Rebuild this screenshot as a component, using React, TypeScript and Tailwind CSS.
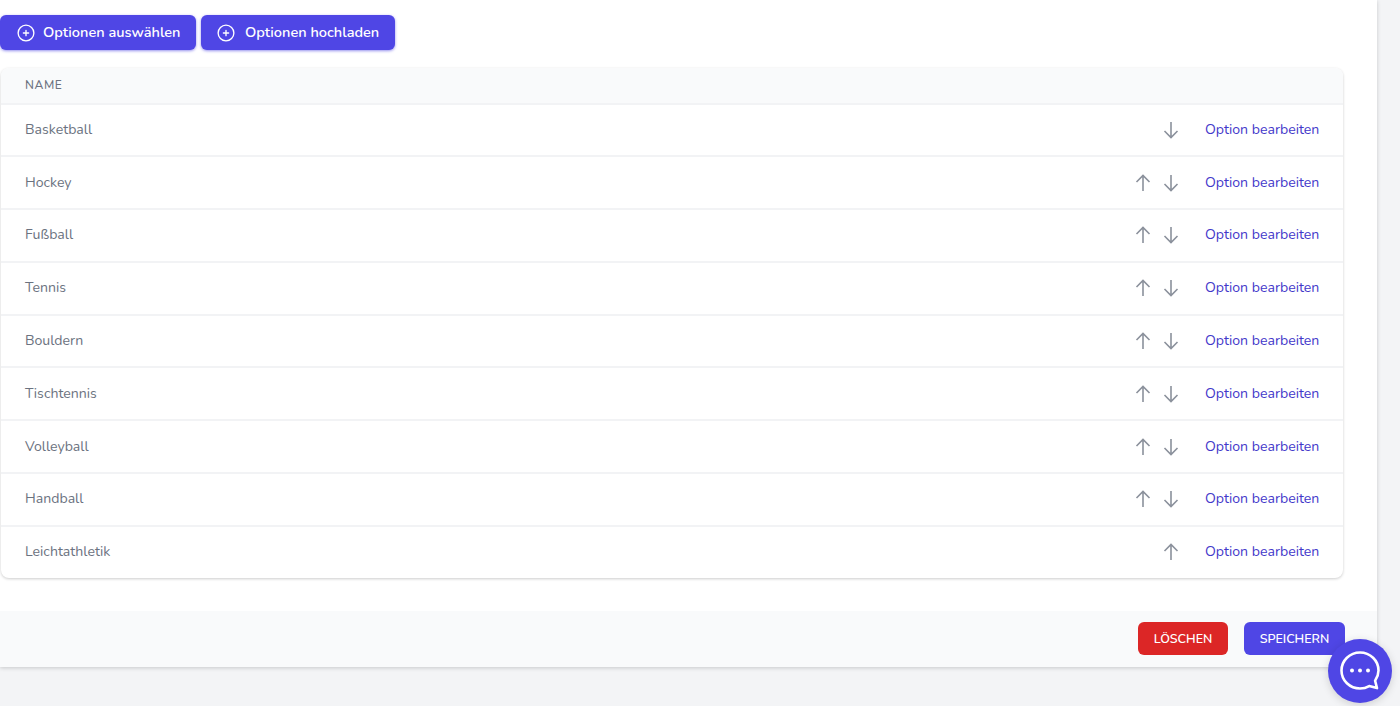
import React from "react";

const rows: [string, boolean, boolean][] = [
  ["Basketball", false, true],
  ["Hockey", true, true],
  ["Fußball", true, true],
  ["Tennis", true, true],
  ["Bouldern", true, true],
  ["Tischtennis", true, true],
  ["Volleyball", true, true],
  ["Handball", true, true],
  ["Leichtathletik", true, false],
];

function PlusCircle() {
  return (
    <svg width="18" height="18" viewBox="0 0 24 24" fill="none" stroke="currentColor" strokeWidth="1.8" strokeLinecap="round" className="shrink-0">
      <circle cx="12" cy="12" r="10.5" />
      <path d="M12 8.5v7M8.5 12h7" />
    </svg>
  );
}

function Arrow({ up }: { up?: boolean }) {
  return (
    <svg width="18" height="20" viewBox="0 0 18 20" fill="none" stroke="#8b919c" strokeWidth="1.6" className={up ? "rotate-180" : ""}>
      <path d="M9 2v15.5M2.5 11 9 17.5 15.5 11" />
    </svg>
  );
}

export default function App() {
  return (
    <div className="relative h-[706px] w-[1400px] overflow-hidden bg-[#f3f4f6] font-['Nunito','Lato','Noto_Sans',sans-serif] text-sm">
      <div className="flex h-[667px] w-[1377px] flex-col bg-white shadow-[0_1px_4px_rgba(0,0,0,0.18)]">
        <div className="flex flex-1 flex-col pl-px pr-[34px] pt-[15px]">
          <div className="flex gap-[5px] -ml-px">
            <button className="flex h-[35px] w-[196px] items-center gap-[8px] rounded-md bg-[#4f46e5] pl-[17px] text-[14.55px] font-semibold text-white shadow-[0_1px_3px_rgba(79,70,229,0.6)]">
              <PlusCircle />
              Optionen auswählen
            </button>
            <button className="flex h-[35px] w-[194px] items-center gap-[10px] rounded-md bg-[#4f46e5] pl-[16px] text-[14.55px] font-semibold text-white shadow-[0_1px_3px_rgba(79,70,229,0.6)]">
              <PlusCircle />
              Optionen hochladen
            </button>
          </div>
          <div className="mt-[18px] overflow-hidden rounded-lg bg-white shadow-[0_1px_3px_rgba(0,0,0,0.2)]">
            <div className="flex h-[34.5px] items-center bg-[#f9fafb] px-6 pb-px text-xs font-medium tracking-wider text-[#6b7280]">
              NAME
            </div>
            {rows.map(([name, up, down]) => (
              <div key={name} className="flex h-[52.8px] items-center border-t-2 border-[#f2f3f5] px-6 text-[14.1px] text-[#6b7280]">
                <span className="flex-1">{name}</span>
                <div className="flex w-[46px] justify-end gap-[10px]">
                  {up && <Arrow up />}
                  {down && <Arrow />}
                </div>
                <a className="ml-[25px] w-[114px] whitespace-nowrap text-[#4338ca]">Option bearbeiten</a>
              </div>
            ))}
          </div>
        </div>
        <div className="flex h-[56px] items-start justify-end gap-4 bg-[#f9fafb] pr-8 pt-[11px]">
          <button className="h-[33px] w-[90px] rounded-md bg-[#dc2626] text-[12.5px] font-semibold text-white">LÖSCHEN</button>
          <button className="h-[33px] w-[101px] rounded-md bg-[#4f46e5] text-[12.5px] font-semibold text-white">SPEICHERN</button>
        </div>
      </div>
      <div className="absolute left-[1328px] top-[639px] flex h-16 w-16 items-center justify-center rounded-full bg-[#4f46e5] shadow-[0_2px_8px_rgba(0,0,0,0.15)]">
        <svg width="42" height="42" viewBox="0 0 42 42" fill="none">
          <path d="M21 2.5C10.8 2.5 2.5 10.4 2.5 20.5S10.8 38.5 21 38.5c3.6 0 6.6-.9 9.2-2.4l7.8 2-1.9-7.4c1.9-2.8 3.4-6.2 3.4-10.2C39.5 10.4 31.2 2.5 21 2.5Z" stroke="white" strokeWidth="2.6" strokeLinejoin="round" />
          <circle cx="13" cy="20.5" r="2" fill="white" />
          <circle cx="21" cy="20.5" r="2" fill="white" />
          <circle cx="29" cy="20.5" r="2" fill="white" />
        </svg>
      </div>
    </div>
  );
}
